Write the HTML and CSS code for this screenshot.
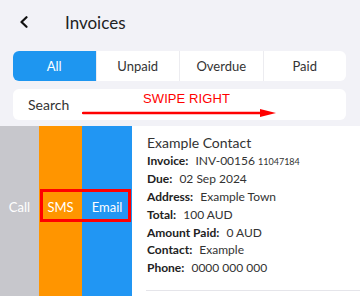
FILE: index.html
```html
<!DOCTYPE html>
<html>
<head>
<meta charset="utf-8">
<link rel="stylesheet" href="styles.css">
</head>
<body>
<div class="screen">
  <header class="topbar">
    <svg class="back" width="10" height="12" viewBox="0 0 10 12"><path d="M7.5 1.2 L2.5 6 L7.5 10.8" fill="none" stroke="#111" stroke-width="2.2" stroke-linecap="round" stroke-linejoin="round"/></svg>
    <h1 class="title">Invoices</h1>
  </header>

  <nav class="segments">
    <div class="seg active">All</div>
    <div class="seg">Unpaid</div>
    <div class="seg">Overdue</div>
    <div class="seg">Paid</div>
  </nav>

  <div class="search-wrap">
    <div class="search">Search</div>
    <div class="swipe-note">
      <span class="swipe-text">SWIPE RIGHT</span>
      <svg class="swipe-arrow" width="195" height="10" viewBox="0 0 195 10"><line x1="1" y1="5" x2="180" y2="5" stroke="#f00" stroke-width="2.4" stroke-linecap="round"/><polygon points="178,1 194,5 178,9" fill="#f00"/></svg>
    </div>
  </div>

  <section class="row">
    <div class="action call"><span>Call</span></div>
    <div class="action sms"><span>SMS</span></div>
    <div class="action email"><span>Email</span></div>
    <div class="highlight"></div>
    <article class="card">
      <div class="details">
        <div class="name">Example Contact</div>
        <div class="line"><b>Invoice:</b> INV-00156 <small>11047184</small></div>
        <div class="line"><b>Due:</b> 02 Sep 2024</div>
        <div class="line"><b>Address:</b> Example Town</div>
        <div class="line"><b>Total:</b> 100 AUD</div>
        <div class="line"><b>Amount Paid:</b> 0 AUD</div>
        <div class="line"><b>Contact:</b> Example</div>
        <div class="line"><b>Phone:</b> 0000 000 000</div>
      </div>
    </article>
  </section>
</div>
</body>
</html>
```

FILE: styles.css
```css
* { box-sizing: border-box; }
html, body { margin: 0; padding: 0; }
body {
  background: #f2f2f7;
  font-family: Lato, "Noto Sans", sans-serif;
  color: #222;
  width: 360px;
  height: 296px;
  overflow: hidden;
}
.screen { position: relative; }

.topbar {
  height: 44px;
  display: flex;
  align-items: center;
  padding-left: 19px;
}
.back { display: block; }
.title {
  margin: 0 0 0 36px;
  font-size: 17px;
  font-weight: 400;
  color: #222;
}

.segments {
  margin: 7px 14px 0 13px;
  height: 30px;
  display: flex;
  background: #fff;
  border-radius: 6px;
  overflow: hidden;
}
.seg {
  flex: 1;
  display: flex;
  align-items: center;
  justify-content: center;
  font-size: 13px;
  color: #333;
  border-left: 1px solid #ececf0;
}
.seg:first-child { border-left: none; }
.seg.active { background: #1e96f0; color: #fff; }

.search-wrap {
  position: relative;
  margin: 8px 14px 0 13px;
}
.search {
  height: 31px;
  background: #fff;
  border-radius: 6px;
  display: flex;
  align-items: center;
  padding-left: 15px;
  font-size: 14px;
  color: #333;
}
.swipe-note {
  position: absolute;
  left: 69px;
  top: 0;
  width: 200px;
  height: 31px;
}
.swipe-text {
  position: absolute;
  left: 61px;
  top: 2px;
  font-family: "Liberation Sans", Arial, sans-serif;
  font-size: 13px;
  color: #f00;
  letter-spacing: 0.1px;
}
.swipe-arrow {
  position: absolute;
  left: 0;
  top: 19px;
}

.row {
  position: relative;
  margin-top: 6px;
  display: flex;
  height: 176px;
}
.action {
  display: flex;
  align-items: center;
  justify-content: center;
  color: #fff;
  font-size: 13px;
  padding-bottom: 14px;
}
.call { width: 39px; background: #c7c7cc; }
.sms { width: 43px; background: #ff9500; }
.email { width: 50px; background: #2196f3; }
.highlight {
  position: absolute;
  left: 40px;
  top: 63px;
  width: 91px;
  height: 33px;
  border: 3px solid #f00;
}
.card {
  flex: 1;
  background: #fff;
  padding: 8px 0 0 14px;
}
.details {
  border-bottom: 1px solid #e5e5ea;
  padding-bottom: 13px;
}
.name {
  font-size: 14px;
  line-height: 17.7px;
  color: #333;
  padding-left: 1px;
}
.line {
  font-size: 12px;
  line-height: 17.7px;
  color: #333;
  padding-left: 1px;
  white-space: nowrap;
}
.line b { font-weight: 700; color: #222; margin-right: 4px; }
.line small { font-size: 9px; }
```
